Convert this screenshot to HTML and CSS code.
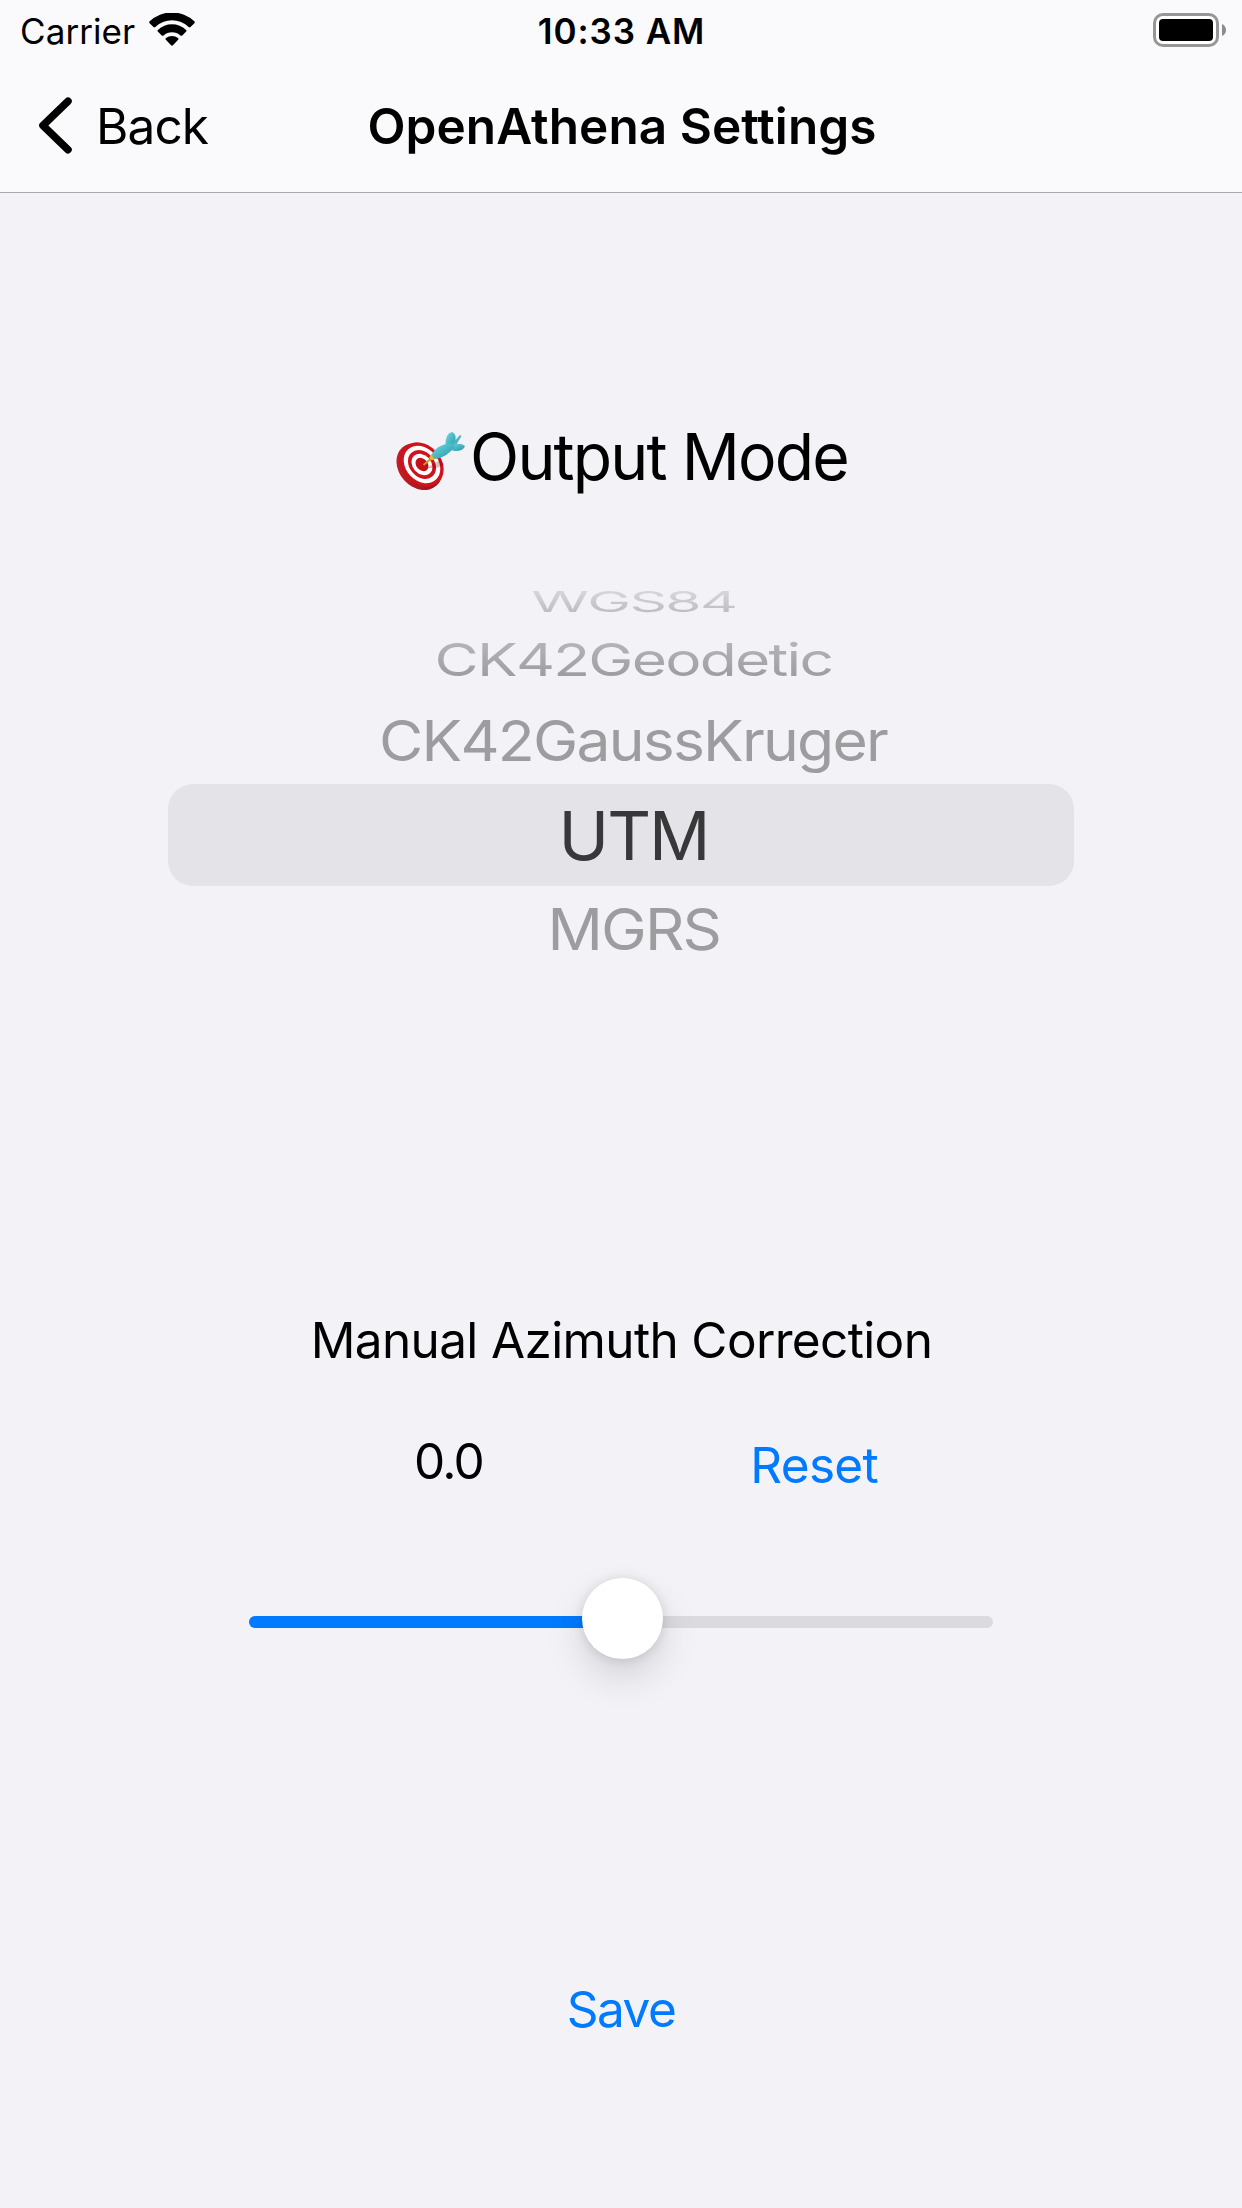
FILE: index.html
```html
<!DOCTYPE html>
<html lang="en">
<head>
<meta charset="utf-8">
<title>OpenAthena Settings</title>
<link rel="stylesheet" href="styles.css">
</head>
<body>
<header class="header">
  <div class="status-bar">
    <div class="carrier">
      <span>Carrier</span>
      <svg class="wifi" width="46" height="34" viewBox="0 0 46 34" aria-hidden="true">
        <path d="M0.6 10.2Q-.3 9.3 .7 8.3A32.5 32.5 0 0 1 45.3 8.3Q46.3 9.3 45.4 10.2L41.5 14Q40.6 14.8 39.7 14A24.3 24.3 0 0 0 6.3 14Q5.4 14.8 4.5 14Z"/>
        <path d="M8.8 18.6Q7.9 17.8 8.9 16.9A20.7 20.7 0 0 1 37.1 16.9Q38.1 17.8 37.2 18.6L33.3 22.4Q32.4 23.1 31.4 22.4A12.7 12.7 0 0 0 14.6 22.4Q13.6 23.1 12.7 22.4Z"/>
        <path d="M16.8 26.7Q16 25.9 17 25.1A9.4 9.4 0 0 1 29 25.1Q30 25.9 29.2 26.7L23.9 32.3Q23 33.2 22.1 32.3Z"/>
      </svg>
    </div>
    <time class="clock">10:33 AM</time>
    <svg class="battery" width="74" height="34" viewBox="0 0 74 34" aria-hidden="true">
      <rect x="1.5" y="1.5" width="63" height="31" rx="8.5" fill="#fff" stroke="#969698" stroke-width="3"/>
      <rect x="6" y="6" width="54" height="22" rx="4" fill="#000"/>
      <path d="M69 11Q73 12.8 73 17Q73 21.2 69 23Z" fill="#8c8c8e"/>
    </svg>
  </div>
  <nav class="nav-bar">
    <a class="back">
      <svg width="33" height="58" viewBox="0 0 33 58" fill="none" stroke="#000" stroke-width="7.5" stroke-linecap="round" stroke-linejoin="round" aria-hidden="true">
        <path d="M29 4.2L3.9 28.5L29 52.7"/>
      </svg>
      <span>Back</span>
    </a>
    <h1 class="title">OpenAthena Settings</h1>
  </nav>
</header>
<main class="content">
  <h2 class="mode-heading">
    <svg class="dart" width="70" height="62" viewBox="0 0 70 62" aria-hidden="true">
      <defs>
        <linearGradient id="rim" x1="0" y1="0" x2="1" y2="1"><stop offset="0" stop-color="#c9202a"/><stop offset="1" stop-color="#8d0f17"/></linearGradient>
        <linearGradient id="fin" x1="0" y1="0" x2="1" y2="1"><stop offset="0" stop-color="#6fdbe2"/><stop offset="1" stop-color="#2596a6"/></linearGradient>
      </defs>
      <ellipse cx="23.4" cy="35.6" rx="20.5" ry="25.6" transform="rotate(-42 23.4 35.6)" fill="url(#rim)"/>
      <g transform="rotate(-42 26 33.5)">
        <ellipse cx="26" cy="33.5" rx="19.3" ry="24.2" fill="#d0121d"/>
        <ellipse cx="26" cy="33.5" rx="16.2" ry="20.6" fill="#fff"/>
        <ellipse cx="26" cy="33.5" rx="12.4" ry="15.8" fill="#d0121d"/>
        <ellipse cx="26" cy="33.5" rx="9.2" ry="11.8" fill="#fff"/>
        <ellipse cx="26" cy="33.5" rx="5.700" ry="7.4" fill="#c3101b"/>
      </g>
      <path d="M31 37L44 29L48 33Q42 38 36 37Z" fill="#600" opacity=".25"/>
      <path d="M28 33.5L35.5 27.5" stroke="#d79a16" stroke-width="1.8" stroke-linecap="round"/>
      <path d="M33 26.8L36 22.4L41 27.6L35.8 29.3Z" fill="#efb71f"/>
      <path d="M49.500 14Q49 3 56 1Q61 2 59 13L54 18Z" fill="url(#fin)"/>
      <path d="M56 13L64 4L65.500 5L59.5 15Z" fill="#49b6c1"/>
      <path d="M52 17Q62 9.500 69 15Q67.500 20.500 58 20Z" fill="url(#fin)"/>
      <path d="M36 23Q41 14 53 12.500Q59 12 58 16.500Q52 25 41 27.700Q36 28.300 36 23Z" fill="url(#fin)"/>
    </svg>
    <span>Output Mode</span>
  </h2>
  <ul class="picker">
    <li class="option far"><span>WGS84</span></li>
    <li class="option mid"><span>CK42Geodetic</span></li>
    <li class="option near"><span>CK42GaussKruger</span></li>
    <li class="option selected"><span>UTM</span></li>
    <li class="option below"><span>MGRS</span></li>
  </ul>
  <section class="azimuth">
    <h3 class="label">Manual Azimuth Correction</h3>
    <div class="value-row">
      <output class="value">0.0</output>
      <a class="link reset">Reset</a>
    </div>
    <div class="slider"><div class="fill"></div><div class="thumb"></div></div>
  </section>
  <a class="link save">Save</a>
</main>
</body>
</html>
```
FILE: styles.css
```css
* { box-sizing: border-box; }
body {
  margin: 0;
  width: 1242px;
  height: 2208px;
  overflow: hidden;
  background: #f2f2f7;
  color: #000;
  font: 400 49.5px/60px Inter, "Liberation Sans", sans-serif;
}
h1, h2, h3, ul { margin: 0; padding: 0; font-weight: 400; font-size: inherit; }
span, h3, a, output, time { white-space: nowrap; }

.header {
  height: 193px;
  background: #fafafd;
  border-bottom: 1px solid #a9a9ad;
}
.status-bar {
  display: grid;
  grid-template-columns: 1fr auto 1fr;
  height: 63px;
  font-size: 35px;
  line-height: 63px;
}
.carrier { display: flex; padding-left: 20px; gap: 14px; letter-spacing: .08px; }
.wifi { margin-top: 13px; }
.clock { padding-left: 1px; font-weight: 600; letter-spacing: .93px; }
.battery { justify-self: end; margin: 13px 15px 0 0; }

.nav-bar {
  display: grid;
  grid-template-columns: 1fr auto 1fr;
  align-items: center;
  height: 126px;
}
.back { display: flex; align-items: center; gap: 24px; padding-left: 39px; letter-spacing: -.9px; }
.title { padding-left: 2px; font-weight: 600; letter-spacing: .06px; }

.content { display: flex; flex-direction: column; align-items: center; }
.mode-heading {
  display: flex;
  align-items: center;
  gap: 4px;
  height: 80px;
  margin-top: 224px;
  padding-left: 2px;
  font-size: 64.3px;
  line-height: 80px;
  letter-spacing: -1.85px;
}
.dart { margin-top: 10px; }

.picker {
  display: flex;
  flex-direction: column;
  width: 906px;
  margin-top: 85px;
  list-style: none;
  font-size: 68px;
  letter-spacing: -2px;
  color: #9d9da0;
}
.option { display: flex; align-items: center; justify-content: center; padding-left: 25px; }
.option span { line-height: 84px; }
.far { height: 39.6px; }
.mid { height: 75.4px; }
.near { height: 87px; }
.selected { height: 102px; border-radius: 25px; background: #e3e3e8; color: #38383a; }
.below { height: 85.4px; }
.far span, .mid span {
  color: transparent;
  background: linear-gradient(#d6d6da 20%, #bebec2 80%);
  -webkit-background-clip: text;
  background-clip: text;
}
.mid span { background-image: linear-gradient(#b5b5b8 20%, #9e9ea1 80%); }
.far span { transform: scale(.863, .414); }
.mid span { transform: scale(.89, .667); }
.near span { transform: scale(.891, .828); }
.below span { transform: scale(.902, .838); }

.azimuth { width: 744px; margin-top: 338.6px; }
.label { padding-left: 1px; text-align: center; letter-spacing: -.64px; }
.value-row { display: flex; justify-content: space-between; padding: 61.5px 115px 0 165px; }
.value { letter-spacing: -1.74px; }
.link { color: #007aff; }
.reset { margin-top: 4px; letter-spacing: -.69px; }
.slider {
  position: relative;
  height: 12px;
  margin-top: 120.9px;
  border-radius: 6px;
  background: #dadadf;
}
.fill { width: 50%; height: 100%; border-radius: 6px 0 0 6px; background: #007aff; }
.thumb {
  position: absolute;
  top: -38px;
  left: 333px;
  width: 81px;
  height: 81px;
  border-radius: 50%;
  background: #fff;
  box-shadow: 0 1px 12px rgba(0, 0, 0, .12), 0 18px 38px rgba(0, 0, 0, .13);
}
.save { margin-top: 350.5px; letter-spacing: -1.5px; }
```
